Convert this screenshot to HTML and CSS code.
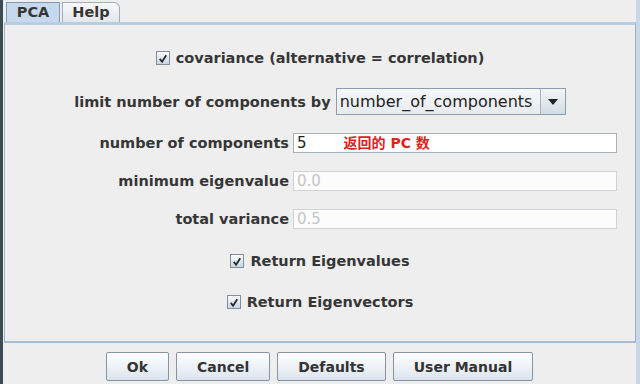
FILE: index.html
```html
<!DOCTYPE html>
<html lang="en">
<head>
  <meta charset="UTF-8">
  <title>PCA</title>
  <link rel="stylesheet" href="styles.css">
</head>
<body>
  <div class="frame">
    <!-- Tab strip -->
    <div class="tabs">
      <div class="tab active">PCA</div>
      <div class="tab">Help</div>
    </div>

    <!-- PCA options panel -->
    <div class="panel">
      <label class="check-row first">
        <span class="checkbox"><svg viewBox="0 0 13 13" width="13" height="13"><path d="M3 7 L5.5 10 L10 3" fill="none" stroke="#2a2a2a" stroke-width="2"/></svg></span>
        covariance (alternative = correlation)
      </label>

      <div class="combo-row">
        <span class="label">limit number of components by</span>
        <div class="combo">
          <span class="combo-value">number_of_components</span>
          <span class="combo-arrow"><svg viewBox="0 0 10 6" width="10" height="6"><path d="M0 0 L10 0 L5 6 Z" fill="#222"/></svg></span>
        </div>
      </div>

      <div class="field-row">
        <span class="label">number of components</span>
        <div class="field">5<span class="note">返回的 PC 数</span></div>
      </div>
      <div class="field-row">
        <span class="label">minimum eigenvalue</span>
        <div class="field disabled">0.0</div>
      </div>
      <div class="field-row">
        <span class="label">total variance</span>
        <div class="field disabled">0.5</div>
      </div>

      <label class="check-row values">
        <span class="checkbox"><svg viewBox="0 0 13 13" width="13" height="13"><path d="M3 7 L5.5 10 L10 3" fill="none" stroke="#2a2a2a" stroke-width="2"/></svg></span>
        Return Eigenvalues
      </label>
      <label class="check-row vectors">
        <span class="checkbox"><svg viewBox="0 0 13 13" width="13" height="13"><path d="M3 7 L5.5 10 L10 3" fill="none" stroke="#2a2a2a" stroke-width="2"/></svg></span>
        Return Eigenvectors
      </label>
    </div>

    <!-- Dialog buttons -->
    <div class="buttons">
      <button type="button">Ok</button>
      <button type="button">Cancel</button>
      <button type="button">Defaults</button>
      <button type="button">User Manual</button>
    </div>
  </div>
</body>
</html>
```

FILE: styles.css
```css
* {
  margin: 0;
  padding: 0;
  box-sizing: border-box;
}

body {
  width: 640px;
  height: 384px;
  overflow: hidden;
  background-color: #eeeeee;
  font-family: "DejaVu Sans", sans-serif;
  font-weight: bold;
  font-size: 14.5px;
  color: #363636;
}

.frame {
  height: 384px;
  border-left: 3px solid #3d4b55;
  border-right: 4px solid #c9d8e6;
  display: flex;
  flex-direction: column;
}

/* Tabs */
.tabs {
  display: flex;
  align-items: flex-end;
  height: 22px;
  padding-left: 3px;
  gap: 2px;
}

.tab {
  height: 20px;
  line-height: 18px;
  text-align: center;
  border: 1px solid #a3adb8;
  border-bottom: none;
  background: linear-gradient(#f7f8fa, #e3e7eb);
  width: 58px;
  border-top-right-radius: 6px;
}

.tab.active {
  width: 54px;
  background: #c6d8ec;
  border-color: #7f99b6;
  border-top-right-radius: 0;
}

/* Panel */
.panel {
  margin-left: 1px;
  height: 321px;
  border: 1px solid #9fb0c2;
  border-top: 3px solid #b9cde1;
  border-bottom: 2px solid #a9bed3;
  display: flex;
  flex-direction: column;
}

.check-row {
  display: flex;
  align-items: center;
  justify-content: center;
  gap: 6px;
  height: 20px;
}

.check-row.first { margin-top: 23px; }
.check-row.values { margin-top: 22px; }
.check-row.vectors { margin-top: 21px; }

.checkbox {
  width: 14px;
  height: 14px;
  border: 1px solid #7f8d9c;
  background: linear-gradient(#fbfcfe, #c9d5e2);
  display: flex;
  align-items: center;
  justify-content: center;
}

.combo-row {
  display: flex;
  align-items: center;
  justify-content: center;
  gap: 5px;
  margin-top: 20px;
  height: 27px;
}

.combo {
  width: 230px;
  height: 27px;
  border: 1px solid #8d9cac;
  background: linear-gradient(#f6f8fa, #e6ebf0);
  display: flex;
}

.combo-value {
  flex: 1;
  padding-left: 3px;
  line-height: 25px;
  font-weight: normal;
  font-size: 16px;
  color: #222;
}

.combo-arrow {
  width: 25px;
  border-left: 1px solid #a6b3c0;
  display: flex;
  align-items: center;
  justify-content: center;
  background: linear-gradient(#f2f5f8, #d3dce6);
}

.field-row {
  display: grid;
  grid-template-columns: 1fr 324px;
  gap: 4px;
  align-items: center;
  height: 20px;
  margin-top: 18px;
  margin-right: 18px;
}

.field-row .label {
  text-align: right;
}

.field {
  height: 20px;
  border: 1px solid #a9b0b8;
  background: #fff;
  padding-left: 3px;
  line-height: 18px;
  font-weight: normal;
  font-size: 15px;
  color: #222;
  display: flex;
}

.field.disabled {
  border-color: #cfd3d8;
  background: #fcfcfd;
  color: #c4c6c8;
}

.note {
  margin-left: 37px;
  color: #e0221d;
  font-family: "DejaVu Sans", "Noto Sans CJK SC", sans-serif;
  font-weight: bold;
  font-size: 14px;
}

/* Buttons */
.buttons {
  display: flex;
  justify-content: center;
  gap: 7px;
  margin-top: 9px;
}

button {
  height: 29px;
  padding: 0 20px;
  border: 1px solid #8494a5;
  border-radius: 2px;
  background: linear-gradient(#ffffff, #dbe4ee);
  font-family: "DejaVu Sans", sans-serif;
  font-weight: bold;
  font-size: 14px;
  color: #333;
}
```
